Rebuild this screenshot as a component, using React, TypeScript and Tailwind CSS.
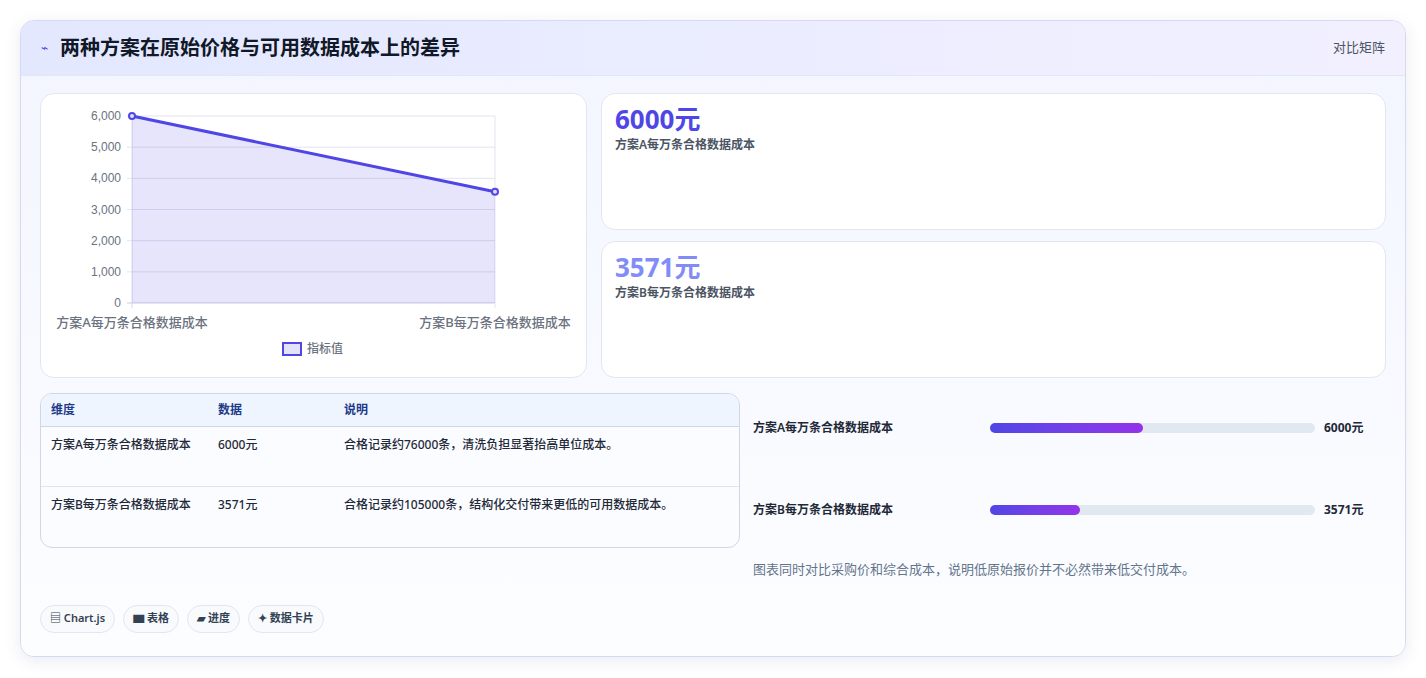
export default function App() {
  const f = { fontFamily: '"Noto Sans", "Noto Sans CJK SC", sans-serif' };
  const ys = [6000, 5000, 4000, 3000, 2000, 1000, 0];
  const py = (v: number) => 22 + (209 - 22) * (1 - v / 6000);
  return (
    <div className="w-[1426px] h-[678px] bg-white pt-[20px] px-[20px]" style={f}>
      <div className="w-[1386px] h-[637px] rounded-[14px] border border-[#d5daf0] bg-[#f8faff] shadow-[0_4px_16px_rgba(80,90,160,0.12)] overflow-hidden flex flex-col">
        <div className="h-[55px] shrink-0 flex items-center justify-between px-[20px] bg-gradient-to-r from-[#e3e8ff] to-[#f2f0ff] border-b border-[#e2e6f5]">
          <div className="flex items-center gap-[12px]">
            <span className="text-[#4f46e5] text-[12px]">⌁</span>
            <span className="text-[20px] font-bold text-[#111827]">两种方案在原始价格与可用数据成本上的差异</span>
          </div>
          <span className="text-[13px] text-[#4b5563]">对比矩阵</span>
        </div>
        <div className="flex-1 px-[19px] pt-[17px] bg-gradient-to-b from-[#f3f6ff] to-[#fcfdff]">
          <div className="flex gap-[14px] h-[285px]">
            <div className="w-[547px] h-[285px] bg-white rounded-[14px] border border-[#e2e6f0]">
              <svg width="547" height="285">
                {ys.map((v) => (
                  <g key={v}>
                    <line x1="86" x2="454" y1={py(v)} y2={py(v)} stroke={v === 0 ? "#c8cbe0" : "#e3e3f0"} />
                    <text x="80" y={py(v) + 4} textAnchor="end" fontSize="12" fill="#6b7280" fontFamily="Liberation Sans, sans-serif">{v.toLocaleString("en-US")}</text>
                  </g>
                ))}
                <line x1="91" x2="91" y1="22" y2="214" stroke="#d8d8e8" />
                <line x1="454" x2="454" y1="22" y2="214" stroke="#e3e3f0" />
                <polygon points={`91,${py(6000)} 454,${py(3571)} 454,209 91,209`} fill="rgba(79,70,229,0.14)" />
                <line x1="91" y1={py(6000)} x2="454" y2={py(3571)} stroke="#4f46e5" strokeWidth="3" />
                <circle cx="91" cy={py(6000)} r="3" fill="#e0ddfb" stroke="#4f46e5" strokeWidth="2" />
                <circle cx="454" cy={py(3571)} r="3" fill="#e0ddfb" stroke="#4f46e5" strokeWidth="2" />
                <text x="91" y="233" textAnchor="middle" fontSize="13" fontWeight="500" fill="#6b7280">方案A每万条合格数据成本</text>
                <text x="454" y="233" textAnchor="middle" fontSize="13" fontWeight="500" fill="#6b7280">方案B每万条合格数据成本</text>
                <rect x="242" y="249" width="18" height="12" fill="#e4e1fb" stroke="#4f46e5" strokeWidth="2" />
                <text x="266" y="259" fontSize="12" fontWeight="500" fill="#6b7280">指标值</text>
              </svg>
            </div>
            <div className="flex-1 flex flex-col gap-[11px]">
              {[["6000元", "text-[#4f46e5]", "方案A每万条合格数据成本"], ["3571元", "text-[#818cf8]", "方案B每万条合格数据成本"]].map(([v, c, l]) => (
                <div key={v} className="flex-1 bg-white rounded-[14px] border border-[#e2e6f0] px-[13px] pt-[8px]">
                  <div className={`text-[26px] font-bold leading-[34px] ${c}`}>{v}</div>
                  <div className="text-[12px] font-semibold text-[#4b5563]">{l}</div>
                </div>
              ))}
            </div>
          </div>
          <div className="flex gap-[13px] mt-[15px]">
            <div className="w-[700px]">
              <div className="rounded-[12px] border border-[#cfd6e4] overflow-hidden bg-[#fafcff] text-[12px]">
                <div className="flex h-[33px] items-center bg-[#eef5ff] border-b border-[#cfd6e4] text-[#1e3a8a] font-semibold">
                  <div className="w-[177px] pl-[10px]">维度</div><div className="w-[126px]">数据</div><div>说明</div>
                </div>
                {[["方案A每万条合格数据成本", "6000元", "合格记录约76000条，清洗负担显著抬高单位成本。"], ["方案B每万条合格数据成本", "3571元", "合格记录约105000条，结构化交付带来更低的可用数据成本。"]].map((r, i) => (
                  <div key={i} className={`flex h-[60px] pt-[9px] text-[#1f2937] font-medium ${i === 0 ? "border-b border-[#dfe4ee]" : ""}`}>
                    <div className="w-[177px] pl-[10px]">{r[0]}</div><div className="w-[126px]">{r[1]}</div><div>{r[2]}</div>
                  </div>
                ))}
              </div>
            </div>
            <div className="flex-1 pt-[26px]">
              {[["方案A每万条合格数据成本", 47, "6000元"], ["方案B每万条合格数据成本", 27.7, "3571元"]].map(([l, p, v], i) => (
                <div key={i} className={`flex items-center h-[18px] ${i === 1 ? "mt-[64px]" : ""}`}>
                  <div className="w-[237px] text-[12px] font-semibold text-[#1f2937]">{l}</div>
                  <div className="w-[325px] h-[10px] rounded-full bg-[#e2e8f0]">
                    <div className="h-full rounded-full bg-gradient-to-r from-[#4f46e5] to-[#9333ea]" style={{ width: `${p}%` }} />
                  </div>
                  <div className="ml-[9px] text-[12px] font-bold text-[#1f2937]">{v}</div>
                </div>
              ))}
              <div className="mt-[41px] text-[13px] text-[#64748b]">图表同时对比采购价和综合成本，说明低原始报价并不必然带来低交付成本。</div>
            </div>
          </div>
          <div className="flex gap-[8px] mt-[25px]">
            {["▤ Chart.js", "▆ 表格", "▰ 进度", "✦ 数据卡片"].map((t) => (
              <div key={t} className="h-[28px] px-[9px] flex items-center rounded-full border border-[#e2e6f0] bg-[#f8fafc] text-[11px] font-semibold text-[#334155]">{t}</div>
            ))}
          </div>
        </div>
      </div>
    </div>
  );
}
